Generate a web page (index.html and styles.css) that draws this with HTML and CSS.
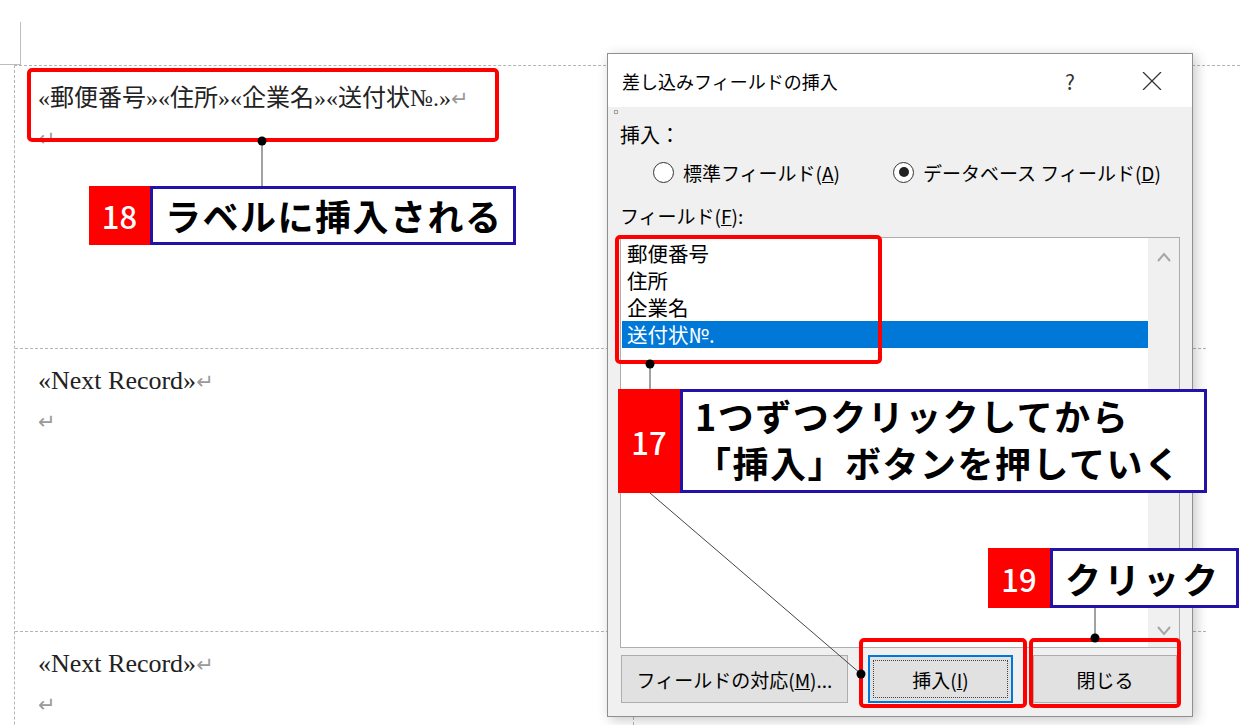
FILE: index.html
```html
<!DOCTYPE html>
<html lang="ja">

<head>
    <meta charset="UTF-8">
    <title>差し込みフィールドの挿入</title>
    <link rel="stylesheet" href="styles.css">
</head>

<body>
    <div class="screen">
        <!-- Word document: label sheet -->
        <div class="doc">
            <div class="corner"></div>
            <div class="labels">
                <div class="cell">
                    <p class="line jp">«郵便番号»«住所»«企業名»«送付状№.»<span class="ret">↵</span></p>
                    <p class="line"><span class="ret">↵</span></p>
                </div>
                <div class="cell"></div>
                <div class="cell">
                    <p class="line">«Next Record»<span class="ret">↵</span></p>
                    <p class="line"><span class="ret">↵</span></p>
                </div>
                <div class="cell"></div>
                <div class="cell">
                    <p class="line">«Next Record»<span class="ret">↵</span></p>
                    <p class="line"><span class="ret">↵</span></p>
                </div>
                <div class="cell"></div>
            </div>
        </div>

        <!-- Insert merge field dialog -->
        <div class="dialog">
            <div class="title-bar">
                <span class="title">差し込みフィールドの挿入</span>
                <span class="title-btn help">?</span>
                <span class="title-btn close">
                    <svg width="20" height="18" viewBox="0 0 20 18">
                        <path d="M1 0 L19 18 M19 0 L1 18" stroke="#333" stroke-width="1.3" fill="none" />
                    </svg>
                </span>
            </div>
            <div class="dialog-body">
                <div class="grip"></div>
                <div class="group-label">挿入：</div>
                <div class="radios">
                    <label class="radio first"><span class="circle"></span><span>標準フィールド(<u>A</u>)</span></label>
                    <label class="radio"><span class="circle checked"></span><span>データベース フィールド(<u>D</u>)</span></label>
                </div>
                <div class="field-label">フィールド(<u>F</u>):</div>
                <div class="listbox">
                    <div class="items">
                        <div class="item">郵便番号</div>
                        <div class="item">住所</div>
                        <div class="item">企業名</div>
                        <div class="item selected">送付状№.</div>
                    </div>
                    <div class="scrollbar">
                        <svg width="14" height="10" viewBox="0 0 14 10">
                            <path d="M1 9 L7 2 L13 9" stroke="#a6a6a6" stroke-width="2" fill="none" />
                        </svg>
                        <svg width="14" height="10" viewBox="0 0 14 10">
                            <path d="M1 1 L7 8 L13 1" stroke="#a6a6a6" stroke-width="2" fill="none" />
                        </svg>
                    </div>
                </div>
                <div class="buttons">
                    <div class="btn btn-map">フィールドの対応(<u>M</u>)...</div>
                    <div class="btn btn-insert"><span class="focus">挿入(<u>I</u>)</span></div>
                    <div class="btn btn-close">閉じる</div>
                </div>
            </div>
        </div>

        <!-- annotations -->
        <div class="mark mark-label"></div>
        <div class="mark mark-list"></div>
        <div class="mark mark-insert"></div>
        <div class="mark mark-close"></div>

        <svg class="connectors" width="1240" height="725" viewBox="0 0 1240 725">
            <g stroke="#444" stroke-width="1">
                <line x1="262" y1="141" x2="262" y2="186" />
                <line x1="650" y1="364" x2="650" y2="389" />
                <line x1="650" y1="493" x2="861" y2="674" />
                <line x1="1095" y1="608" x2="1095" y2="638" />
            </g>
            <g fill="#000">
                <circle cx="262" cy="141" r="4.5" />
                <circle cx="650" cy="364" r="4.5" />
                <circle cx="861" cy="674" r="4.5" />
                <circle cx="1095" cy="638" r="4.5" />
            </g>
        </svg>

        <div class="callout callout-18">
            <span class="num">18</span>
            <span class="text">ラベルに挿入される</span>
        </div>
        <div class="callout callout-17">
            <span class="num">17</span>
            <span class="text">1つずつクリックしてから<br>「挿入」ボタンを押していく</span>
        </div>
        <div class="callout callout-19">
            <span class="num">19</span>
            <span class="text">クリック</span>
        </div>
    </div>
</body>

</html>
```

FILE: styles.css
```css
body {
    margin: 0;
    background: #fff;
    font-family: "Noto Sans CJK JP", sans-serif;
    color: #000;
}

.screen {
    position: relative;
    width: 1240px;
    height: 725px;
    overflow: hidden;
    background: #fff;
}

/* document */

.corner {
    width: 20px;
    height: 42px;
    margin-top: 22px;
    border-right: 1px solid #bdbdbd;
    border-bottom: 1px solid #bdbdbd;
}

.labels {
    display: grid;
    grid-template-columns: 619px 572px;
    margin-left: 14px;
    border-top: 1px dashed #b4b4b4;
    border-left: 1px dashed #b4b4b4;
}

.cell {
    box-sizing: border-box;
    height: 283px;
    padding: 12px 0 0 23px;
    border-bottom: 1px dashed #b4b4b4;
}

.cell:nth-child(odd) {
    border-right: 1px dashed #b4b4b4;
}

.line {
    margin: 0;
    height: 40px;
    line-height: 40px;
    font-family: "Liberation Serif", "Noto Sans CJK JP", serif;
    font-size: 26px;
    color: #222;
    white-space: nowrap;
}

.line.jp {
    font-size: 24px;
}

.ret {
    color: #9a9a9a;
    font-family: "DejaVu Sans", sans-serif;
    font-size: 21px;
}

/* dialog */

.dialog {
    position: absolute;
    left: 607px;
    top: 53px;
    width: 586px;
    height: 664px;
    box-sizing: border-box;
    border: 1px solid #8f8f8f;
    background: #f0f0f0;
    box-shadow: 3px 3px 12px rgba(0, 0, 0, 0.22);
}

.title-bar {
    display: flex;
    align-items: center;
    height: 53px;
    padding-left: 14px;
    background: #fff;
}

.title {
    flex: 1;
    font-size: 18px;
}

.title-btn {
    display: flex;
    align-items: center;
    justify-content: center;
    width: 58px;
    height: 53px;
    font-size: 21px;
    color: #333;
}

.title-btn.close {
    margin-left: 24px;
    margin-right: 11px;
}

.dialog-body {
    padding: 0 12px;
    font-size: 19px;
}

.grip {
    width: 4px;
    height: 4px;
    margin: 3px 0 0 -6px;
    border: 1px solid #a0a0a0;
    box-sizing: border-box;
}

.group-label {
    margin-top: 9px;
    height: 24px;
    line-height: 24px;
    font-size: 20px;
}

.radios {
    display: flex;
    align-items: center;
    height: 30px;
    margin-top: 10px;
    padding-left: 33px;
}

.radio {
    display: flex;
    align-items: center;
    gap: 9px;
    white-space: nowrap;
}

.radio.first {
    width: 240px;
}

.circle {
    display: flex;
    align-items: center;
    justify-content: center;
    width: 21px;
    height: 21px;
    box-sizing: border-box;
    border: 1px solid #333;
    border-radius: 50%;
    background: #fff;
}

.circle.checked::after {
    content: "";
    width: 10px;
    height: 10px;
    border-radius: 50%;
    background: #222;
}

.field-label {
    margin-top: 17px;
    height: 24px;
    line-height: 24px;
}

.listbox {
    display: flex;
    box-sizing: border-box;
    height: 411px;
    margin-top: 9px;
    border: 1px solid #adadad;
    background: #fff;
}

.items {
    flex: 1;
    padding: 2px 0 0 1px;
}

.item {
    height: 27px;
    line-height: 27px;
    padding-left: 5px;
    font-size: 20.5px;
}

.item.selected {
    background: #0078d7;
    color: #fff;
}

.scrollbar {
    display: flex;
    flex-direction: column;
    align-items: center;
    justify-content: space-between;
    width: 31px;
    padding: 14px 0 11px;
    box-sizing: border-box;
    background: #f0f0f0;
}

.buttons {
    display: flex;
    height: 48px;
    margin-top: 7px;
    padding-left: 1px;
}

.btn {
    display: flex;
    align-items: center;
    justify-content: center;
    box-sizing: border-box;
    height: 48px;
    border: 1px solid #adadad;
    background: #e1e1e1;
    white-space: nowrap;
}

.btn-map {
    width: 227px;
}

.btn-insert {
    width: 145px;
    margin-left: 20px;
    padding: 3px;
    border: 2px solid #0078d7;
}

.btn-insert .focus {
    display: flex;
    align-items: center;
    justify-content: center;
    width: 100%;
    height: 100%;
    box-sizing: border-box;
    border: 1px dotted #444;
}

.btn-close {
    width: 144px;
    margin-left: 20px;
}

/* annotations */

.mark {
    position: absolute;
    box-sizing: border-box;
    border: 4px solid #ff0000;
    border-radius: 5px;
}

.mark-label {
    left: 27px;
    top: 68px;
    width: 472px;
    height: 74px;
}

.mark-list {
    left: 615px;
    top: 235px;
    width: 267px;
    height: 129px;
}

.mark-insert {
    left: 859px;
    top: 638px;
    width: 168px;
    height: 70px;
}

.mark-close {
    left: 1029px;
    top: 638px;
    width: 152px;
    height: 70px;
}

.connectors {
    position: absolute;
    left: 0;
    top: 0;
}

.callout {
    position: absolute;
    display: flex;
}

.callout .num {
    display: flex;
    align-items: center;
    justify-content: center;
    width: 62px;
    background: #ff0000;
    color: #fff;
    font-size: 31px;
    font-weight: 500;
}

.callout .text {
    flex: 1;
    box-sizing: border-box;
    border: 3px solid #2212a8;
    background: #fff;
    padding-left: 12px;
    font-size: 36px;
    font-weight: 700;
    letter-spacing: 1.5px;
    white-space: nowrap;
}

.callout-18 {
    left: 89px;
    top: 186px;
    width: 427px;
    height: 59px;
}

.callout-18 .num {
    width: 61px;
}

.callout-18 .text {
    line-height: 53px;
}

.callout-17 {
    left: 618px;
    top: 389px;
    width: 589px;
    height: 104px;
}

.callout-17 .text {
    line-height: 47px;
}

.callout-19 {
    left: 988px;
    top: 548px;
    width: 251px;
    height: 60px;
}

.callout-19 .text {
    line-height: 54px;
    letter-spacing: 3px;
}
```
